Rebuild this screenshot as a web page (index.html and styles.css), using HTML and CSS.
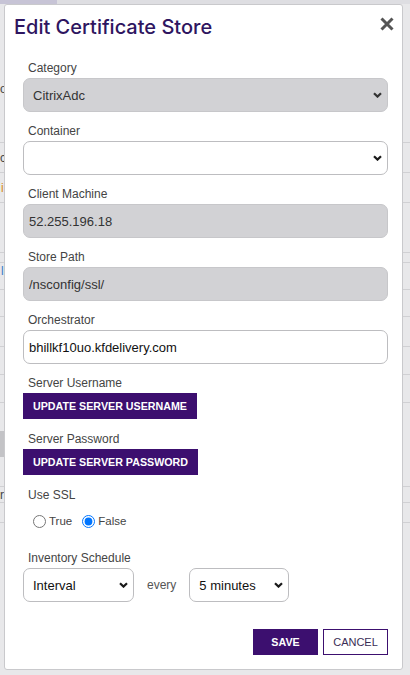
FILE: index.html
```html
<!DOCTYPE html>
<html lang="en">
<head>
<meta charset="utf-8">
<title>Edit Certificate Store</title>
<link rel="stylesheet" href="styles.css">
</head>
<body>
  <div class="page">
    <div class="topbar"><div class="tab"></div></div>
    <div class="bg-row r-head"><span class="frag">o</span></div>
    <div class="bg-row r30"><span class="frag">c</span></div>
    <div class="bg-row r30"><span class="frag orange">i</span></div>
    <div class="bg-row r50"></div>
    <div class="bg-row r10"></div>
    <div class="bg-row r27"><span class="frag blue">l</span></div>
    <div class="bg-row r27"></div>
    <div class="bg-row r30"></div>
    <div class="bg-row r28"></div>
    <div class="bg-row r28"></div>
    <div class="bg-row r84"><div class="bg-block"></div></div>
    <div class="bg-row r16"><span class="frag">r</span></div>
    <div class="bg-row r20"></div>
  </div>

  <div class="modal" role="dialog" aria-labelledby="dlg-title">
    <div class="modal-header">
      <h1 id="dlg-title" class="modal-title">Edit Certificate Store</h1>
      <button class="close-btn" aria-label="Close">
        <svg width="14" height="14" viewBox="0 0 14 14"><path d="M1.5 1.5 L12.5 12.5 M12.5 1.5 L1.5 12.5" stroke="#555" stroke-width="3" fill="none"/></svg>
      </button>
    </div>

    <form class="form">
      <div class="field">
        <label class="field-label">Category</label>
        <div class="select-wrap">
          <select class="control select disabled" disabled><option>CitrixAdc</option></select>
          <svg class="chev" width="9" height="6" viewBox="0 0 9 6"><path d="M1 1.2 L4.5 4.6 L8 1.2" stroke="#333" stroke-width="2.2" fill="none"/></svg>
        </div>
      </div>

      <div class="field">
        <label class="field-label">Container</label>
        <div class="select-wrap">
          <select class="control select"><option></option></select>
          <svg class="chev" width="9" height="6" viewBox="0 0 9 6"><path d="M1 1.2 L4.5 4.6 L8 1.2" stroke="#1a1a1a" stroke-width="2.2" fill="none"/></svg>
        </div>
      </div>

      <div class="field">
        <label class="field-label">Client Machine</label>
        <input class="control disabled" disabled value="52.255.196.18">
      </div>

      <div class="field">
        <label class="field-label">Store Path</label>
        <input class="control disabled" disabled value="/nsconfig/ssl/">
      </div>

      <div class="field">
        <label class="field-label">Orchestrator</label>
        <input class="control" value="bhillkf10uo.kfdelivery.com">
      </div>

      <div class="field field-action">
        <label class="field-label">Server Username</label>
        <button type="button" class="btn-primary">UPDATE SERVER USERNAME</button>
      </div>

      <div class="field field-action">
        <label class="field-label">Server Password</label>
        <button type="button" class="btn-primary">UPDATE SERVER PASSWORD</button>
      </div>

      <div class="field field-radio">
        <label class="field-label">Use SSL</label>
        <div class="radio-row">
          <label class="radio"><input type="radio" name="ssl"><span>True</span></label>
          <label class="radio"><input type="radio" name="ssl" checked><span>False</span></label>
        </div>
      </div>

      <div class="field field-schedule">
        <label class="field-label">Inventory Schedule</label>
        <div class="schedule-row">
          <div class="select-wrap sel-interval">
            <select class="control select"><option>Interval</option></select>
            <svg class="chev chev-sm" width="9" height="6" viewBox="0 0 9 6"><path d="M1 1.2 L4.5 4.6 L8 1.2" stroke="#1a1a1a" stroke-width="2.2" fill="none"/></svg>
          </div>
          <span class="every">every</span>
          <div class="select-wrap sel-minutes">
            <select class="control select"><option>5 minutes</option></select>
            <svg class="chev chev-sm" width="9" height="6" viewBox="0 0 9 6"><path d="M1 1.2 L4.5 4.6 L8 1.2" stroke="#1a1a1a" stroke-width="2.2" fill="none"/></svg>
          </div>
        </div>
      </div>

      <div class="footer">
        <button type="button" class="btn-save">SAVE</button>
        <button type="button" class="btn-cancel">CANCEL</button>
      </div>
    </form>
  </div>
</body>
</html>
```
FILE: styles.css
```css
* { box-sizing: border-box; }
html, body { margin: 0; padding: 0; }
body {
  width: 410px;
  height: 675px;
  overflow: hidden;
  position: relative;
  background: #e8e8ea;
  font-family: "Liberation Sans", Arial, sans-serif;
}

/* background page */
.page { height: 675px; }
.topbar { height: 4px; display: flex; background: #dedee2; }
.topbar .tab { width: 57px; background: #c7c4d6; }
.bg-row {
  position: relative;
  border-bottom: 1px solid #d0d0d3;
  font-size: 12px;
  color: #444;
}
.r-head { height: 139px; padding-top: 78px; }
.r10 { height: 10px; }
.r16 { height: 16px; padding-top: 1px; }
.r20 { height: 20px; }
.r27 { height: 27px; padding-top: 1px; }
.r28 { height: 28px; }
.r30 { height: 30px; padding-top: 8px; }
.r50 { height: 50px; }
.r84 { height: 84px; padding-top: 28px; }
.frag { display: inline-block; line-height: 14px; }
.frag.orange { color: #d98a1c; margin-left: 1px; }
.frag.blue { color: #3a7bc8; margin-left: 1px; }
.bg-block { width: 12px; height: 26px; background: #c3c3c6; }

/* modal */
.modal {
  position: absolute;
  top: 4px;
  left: 4px;
  width: 399px;
  height: 666px;
  background: #fff;
  border: 1px solid #c9c9cc;
  border-radius: 3px;
  padding: 10px 14px 14px 18px;
  display: flex;
  flex-direction: column;
}
.modal-header {
  display: flex;
  justify-content: space-between;
  align-items: flex-start;
  margin: 0 -6px 0 -9px;
}
.modal-title {
  margin: 0;
  font-family: Inter, "Liberation Sans", sans-serif;
  font-weight: 500;
  font-size: 20px;
  line-height: 24px;
  color: #2e1560;
}
.close-btn {
  margin-top: 2px;
  padding: 0;
  border: none;
  background: none;
  width: 14px;
  height: 14px;
  display: block;
}
.close-btn svg { display: block; }

.form { margin-top: 21px; display: flex; flex-direction: column; }
.field { margin-bottom: 11px; display: flex; flex-direction: column; }
.field-label {
  display: block;
  font-size: 12px;
  line-height: 16px;
  color: #444;
  padding-left: 5px;
  margin-bottom: 2px;
}

.control {
  display: block;
  width: 100%;
  height: 34px;
  margin: 0;
  border: 1px solid #bdbdc0;
  border-radius: 7px;
  background: #fff;
  font-family: "Liberation Sans", Arial, sans-serif;
  font-size: 13px;
  color: #111;
  padding: 0 5px;
  outline: none;
}
.control.disabled {
  background: #d2d2d5;
  border-color: #c7c7ca;
  color: #333;
  opacity: 1;
}
.select {
  appearance: none;
  -webkit-appearance: none;
  padding: 0 22px 0 9px;
}
.select-wrap { position: relative; }
.chev {
  position: absolute;
  right: 6px;
  top: 50%;
  margin-top: -3px;
  pointer-events: none;
}
.chev-sm { right: 6px; }

.field-action { margin-bottom: 12px; align-items: flex-start; }
.btn-primary {
  height: 26px;
  padding: 0 10px;
  border: none;
  background: #3c0f6f;
  color: #fff;
  font-family: "Liberation Sans", Arial, sans-serif;
  font-weight: bold;
  font-size: 10.7px;
  white-space: nowrap;
}

.field-radio { margin-bottom: 20px; }
.radio-row {
  display: flex;
  align-items: center;
  height: 18px;
  margin-top: 7px;
  padding-left: 10px;
}
.radio {
  display: flex;
  align-items: center;
  margin-right: 10px;
  font-size: 11.5px;
  color: #444;
}
.radio input { margin: 0 3px 0 0; width: 13px; height: 13px; }

.schedule-row { display: flex; align-items: center; }
.sel-interval { width: 111px; }
.sel-minutes { width: 100px; }
.every { font-size: 12px; color: #555; margin: 0 13px 0 13px; }

.field-schedule { margin-bottom: 0; }
.footer {
  margin-top: 27px;
  display: flex;
  justify-content: flex-end;
  gap: 5px;
}
.btn-save, .btn-cancel {
  width: 65px;
  height: 26px;
  padding: 0;
  font-family: "Liberation Sans", Arial, sans-serif;
  font-size: 11px;
}
.btn-save {
  border: none;
  background: #3c0f6f;
  color: #fff;
  font-weight: bold;
  font-size: 10.7px;
}
.btn-cancel {
  border: 1px solid #3c0f6f;
  background: #fff;
  color: #3a2d55;
}
```
